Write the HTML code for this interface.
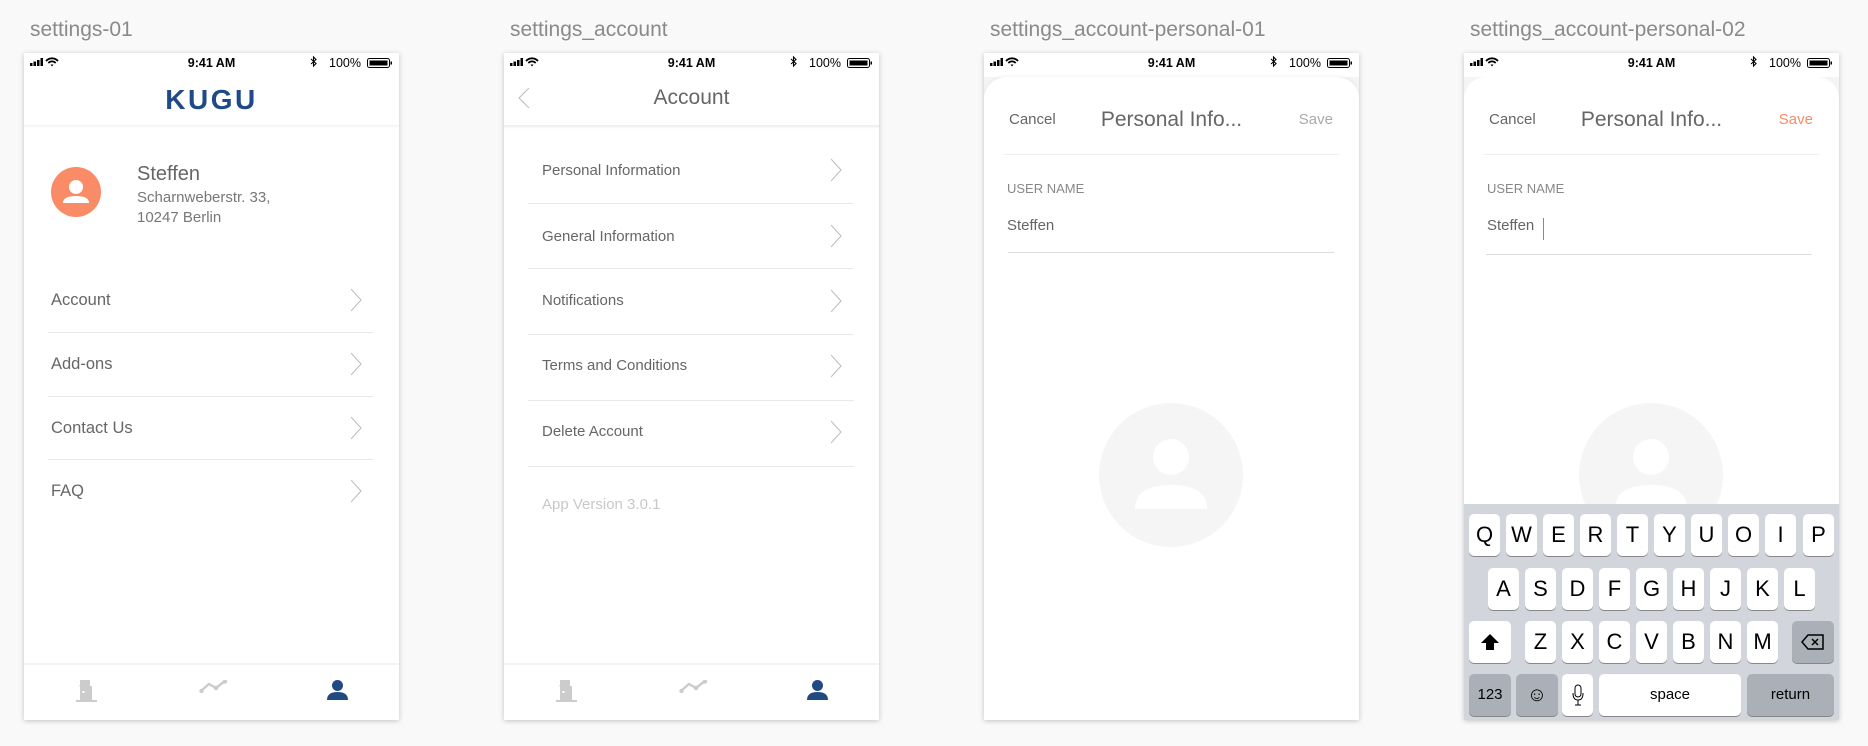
<!DOCTYPE html>
<html><head><meta charset="utf-8"><style>
*{margin:0;padding:0;box-sizing:border-box}
body{width:1868px;height:746px;background:#f9f9f9;position:relative;overflow:hidden;font-family:"Liberation Sans",sans-serif;color:#666}
.lbl{position:absolute;top:18px;font-size:21px;color:#8a8a8a}
.ph{position:absolute;top:53px;width:375px;height:667px;background:#fff;box-shadow:0 1px 5px rgba(0,0,0,.22);overflow:hidden}
.a{position:absolute}
.sb{position:absolute;top:0;left:0;width:375px;height:20px}
.time{position:absolute;top:3px;left:0;width:375px;text-align:center;font-size:12.5px;font-weight:bold;color:#000}
.pct{position:absolute;top:3px;right:38px;font-size:12.5px;color:#000}
.t{position:absolute;font-size:16.5px;color:#666;line-height:20px}
.sep{position:absolute;height:1px;background:#e8e8e8}
.key{position:absolute;width:31px;height:42px;background:#fff;border-radius:5px;box-shadow:0 1px 0 #888;font-size:22px;color:#000;text-align:center;line-height:42px}
.dk{background:#abb0b8}
</style></head><body>
<div class="lbl" style="left:30px">settings-01</div>
<div class="lbl" style="left:510px">settings_account</div>
<div class="lbl" style="left:990px">settings_account-personal-01</div>
<div class="lbl" style="left:1470px">settings_account-personal-02</div>

<svg width="0" height="0" style="position:absolute">
<defs>
<g id="sbl"><rect x="6" y="10" width="2.5" height="3" fill="#000"/><rect x="9.5" y="8.5" width="2.5" height="4.5" fill="#000"/><rect x="13" y="7" width="2.5" height="6" fill="#000"/><rect x="16.5" y="5" width="2.5" height="8" fill="#000"/>
<path d="M22 8 A8 8 0 0 1 34 8 M24.3 10 A5 5 0 0 1 31.7 10" stroke="#000" stroke-width="1.8" fill="none"/><path d="M26.5 11.5 L28 13.5 L29.5 11.5 Z" fill="#000"/></g>
<g id="sbr"><path d="M287 6 L292 10.5 L289.5 13 L289.5 4 L292 6.5 L287 11" stroke="#000" stroke-width="1.1" fill="none"/>
<rect x="343.5" y="5.5" width="22" height="9" rx="2" stroke="#000" fill="none"/><rect x="345.5" y="7.5" width="18" height="5" fill="#000"/><rect x="366.5" y="8.5" width="1.5" height="3" fill="#000"/></g>
<g id="chev"><path d="M0 0 L10 11 L0 22" stroke="#bbb" stroke-width="1" fill="none"/></g>
<g id="tabs"><path d="M55 6 H68 V20 H73 V22 H66 V8 H60 V0 Z" fill="#ccc"/><path d="M56 0 H66 V22 H52 V20 H56 Z" fill="#ccc"/><rect x="58.5" y="11" width="2" height="2" fill="#fff"/>
<path d="M177 11 L185 4 L192 8 L201 1" stroke="#ccc" stroke-width="2.4" fill="none" stroke-linecap="round"/><circle cx="177.5" cy="11" r="2.2" fill="#ccc"/><circle cx="192" cy="8" r="2.2" fill="#ccc"/><circle cx="201" cy="1.5" r="2.2" fill="#ccc"/>
<circle cx="313.5" cy="5.5" r="5.5" fill="#1f4a82"/><path d="M303 20 Q303 12 313.5 12 Q324 12 324 20 Z" fill="#1f4a82"/></g>
</defs></svg>

<!-- PHONE 1 -->
<div class="ph" style="left:24px">
 <svg class="sb" viewBox="0 0 375 20"><use href="#sbl"/><use href="#sbr"/></svg>
 <div class="time">9:41 AM</div><div class="pct">100%</div>
 <div class="a" style="top:72px;left:0;width:375px;height:3px;background:linear-gradient(#f0f0f0,#fff)"></div>
 <div class="a" style="top:31px;left:0;width:375px;text-align:center;font-size:28px;font-weight:bold;color:#1f4a87;letter-spacing:2.5px">KUGU</div>
 <svg class="a" style="left:27px;top:114px" width="50" height="50"><circle cx="25" cy="25" r="25" fill="#f98b67"/><circle cx="25" cy="20" r="7" fill="#fff"/><path d="M12 36 Q12 29 25 29 Q38 29 38 36 Z" fill="#fff"/></svg>
 <div class="t" style="left:113px;top:109px;font-size:20px;line-height:24px">Steffen</div>
 <div class="t" style="left:113px;top:135px;font-size:15px;line-height:20px;color:#777">Scharnweberstr. 33,<br>10247 Berlin</div>
 <div class="t" style="left:27px;top:237px">Account</div>
 <div class="sep" style="left:24px;width:326px;top:279px"></div>
 <div class="t" style="left:27px;top:301px">Add-ons</div>
 <div class="sep" style="left:24px;width:326px;top:343px"></div>
 <div class="t" style="left:27px;top:365px">Contact Us</div>
 <div class="sep" style="left:24px;width:326px;top:406px"></div>
 <div class="t" style="left:27px;top:428px">FAQ</div>
 <svg class="a" style="left:327px;top:0" width="12" height="667"><use href="#chev" y="236"/><use href="#chev" y="300"/><use href="#chev" y="364"/><use href="#chev" y="427"/></svg>
 <div class="a" style="left:0;top:610px;width:375px;height:2px;background:#f3f3f3"></div>
 <svg class="a" style="left:0;top:627px" width="375" height="24"><use href="#tabs"/></svg>
</div>

<!-- PHONE 2 -->
<div class="ph" style="left:504px">
 <svg class="sb" viewBox="0 0 375 20"><use href="#sbl"/><use href="#sbr"/></svg>
 <div class="time">9:41 AM</div><div class="pct">100%</div>
 <svg class="a" style="left:14px;top:34px" width="12" height="22"><path d="M11 1 L1 11 L11 21" stroke="#bbb" stroke-width="1" fill="none"/></svg>
 <div class="a" style="top:33px;left:0;width:375px;text-align:center;font-size:21px;color:#666">Account</div>
 <div class="a" style="top:72px;left:0;width:375px;height:4px;background:linear-gradient(#ececec,#fff)"></div>
 <div class="t" style="left:38px;top:108px;font-size:15px">Personal Information</div>
 <div class="sep" style="left:24px;width:326px;top:150px"></div>
 <div class="t" style="left:38px;top:174px;font-size:15px">General Information</div>
 <div class="sep" style="left:24px;width:326px;top:215px"></div>
 <div class="t" style="left:38px;top:238px;font-size:15px">Notifications</div>
 <div class="sep" style="left:24px;width:326px;top:281px"></div>
 <div class="t" style="left:38px;top:303px;font-size:15px">Terms and Conditions</div>
 <div class="sep" style="left:24px;width:326px;top:347px"></div>
 <div class="t" style="left:38px;top:369px;font-size:15px">Delete Account</div>
 <div class="sep" style="left:24px;width:326px;top:413px"></div>
 <div class="t" style="left:38px;top:442px;font-size:15px;color:#c8c8c8">App Version 3.0.1</div>
 <svg class="a" style="left:327px;top:0" width="12" height="667"><use href="#chev" y="106"/><use href="#chev" y="172"/><use href="#chev" y="237"/><use href="#chev" y="302"/><use href="#chev" y="368"/></svg>
 <div class="a" style="left:0;top:610px;width:375px;height:2px;background:#f3f3f3"></div>
 <svg class="a" style="left:0;top:627px" width="375" height="24"><use href="#tabs"/></svg>
</div>

<!-- PHONE 3 -->
<div class="ph" style="left:984px;background:#f4f4f4">
 <div class="a" style="left:0;top:0;width:375px;height:24px;background:#fff"></div>
 <svg class="sb" viewBox="0 0 375 20"><use href="#sbl"/><use href="#sbr"/></svg>
 <div class="time">9:41 AM</div><div class="pct">100%</div>
 <div class="a" style="left:0;top:24px;width:375px;height:660px;background:#fff;border-radius:22px 22px 0 0;box-shadow:0 -1px 3px rgba(0,0,0,.05)"></div>
 <div class="t" style="left:25px;top:57px;font-size:15px">Cancel</div>
 <div class="a" style="left:0;top:55px;width:375px;text-align:center;font-size:21px;color:#666">Personal Info...</div>
 <div class="t" style="right:26px;top:57px;font-size:15px;color:#aaa">Save</div>
 <div class="sep" style="left:20px;width:335px;top:101px;background:#efefef"></div>
 <div class="t" style="left:23px;top:126px;font-size:13px;color:#888">USER NAME</div>
 <div class="t" style="left:23px;top:163px;font-size:15px">Steffen</div>
 <div class="sep" style="left:24px;width:326px;top:199px;background:#ddd"></div>
 <svg class="a" style="left:115px;top:350px" width="144" height="144"><circle cx="72" cy="72" r="72" fill="#f5f5f5"/><circle cx="72" cy="54" r="18" fill="#fff"/><path d="M36 106 Q36 82 72 82 Q108 82 108 106 Z" fill="#fff"/></svg>
</div>

<!-- PHONE 4 -->
<div class="ph" style="left:1464px;background:#f4f4f4">
 <div class="a" style="left:0;top:0;width:375px;height:24px;background:#fff"></div>
 <svg class="sb" viewBox="0 0 375 20"><use href="#sbl"/><use href="#sbr"/></svg>
 <div class="time">9:41 AM</div><div class="pct">100%</div>
 <div class="a" style="left:0;top:24px;width:375px;height:660px;background:#fff;border-radius:22px 22px 0 0"></div>
 <div class="t" style="left:25px;top:57px;font-size:15px">Cancel</div>
 <div class="a" style="left:0;top:55px;width:375px;text-align:center;font-size:21px;color:#666">Personal Info...</div>
 <div class="t" style="right:26px;top:57px;font-size:15px;color:#f98b67">Save</div>
 <div class="sep" style="left:20px;width:335px;top:101px;background:#efefef"></div>
 <div class="t" style="left:23px;top:126px;font-size:13px;color:#888">USER NAME</div>
 <div class="t" style="left:23px;top:163px;font-size:15px">Steffen</div>
 <div class="a" style="left:79px;top:165px;width:1px;height:22px;background:#888"></div>
 <div class="sep" style="left:22px;width:326px;top:201px;background:#ddd"></div>
 <svg class="a" style="left:115px;top:350px" width="144" height="144"><circle cx="72" cy="72" r="72" fill="#f5f5f5"/><circle cx="72" cy="54" r="18" fill="#fff"/><path d="M36 106 Q36 82 72 82 Q108 82 108 106 Z" fill="#fff"/></svg>
 <div class="a" style="left:0;top:451px;width:375px;height:216px;background:#d2d5db">
  <div class="key" style="left:5px;top:10px">Q</div><div class="key" style="left:42px;top:10px">W</div><div class="key" style="left:79px;top:10px">E</div><div class="key" style="left:116px;top:10px">R</div><div class="key" style="left:153px;top:10px">T</div><div class="key" style="left:190px;top:10px">Y</div><div class="key" style="left:227px;top:10px">U</div><div class="key" style="left:264px;top:10px">O</div><div class="key" style="left:301px;top:10px">I</div><div class="key" style="left:339px;top:10px">P</div>
  <div class="key" style="left:24px;top:64px">A</div><div class="key" style="left:61px;top:64px">S</div><div class="key" style="left:98px;top:64px">D</div><div class="key" style="left:135px;top:64px">F</div><div class="key" style="left:172px;top:64px">G</div><div class="key" style="left:209px;top:64px">H</div><div class="key" style="left:246px;top:64px">J</div><div class="key" style="left:283px;top:64px">K</div><div class="key" style="left:320px;top:64px">L</div>
  <div class="key" style="left:5px;top:117px;width:42px"><svg width="20" height="18" style="margin-top:12px"><path d="M10 1 L19 10 H14 V17 H6 V10 H1 Z" fill="#000"/></svg></div>
  <div class="key" style="left:61px;top:117px">Z</div><div class="key" style="left:98px;top:117px">X</div><div class="key" style="left:135px;top:117px">C</div><div class="key" style="left:172px;top:117px">V</div><div class="key" style="left:209px;top:117px">B</div><div class="key" style="left:246px;top:117px">N</div><div class="key" style="left:283px;top:117px">M</div>
  <div class="key dk" style="left:328px;top:117px;width:42px"><svg width="24" height="16" style="margin-top:13px"><path d="M7 1 H22 V15 H7 L1 8 Z" stroke="#000" stroke-width="1.5" fill="none"/><path d="M11 5 L17 11 M17 5 L11 11" stroke="#000" stroke-width="1.5"/></svg></div>
  <div class="key dk" style="left:5px;top:170px;width:42px;font-size:15px">123</div>
  <div class="key dk" style="left:52px;top:170px;width:42px;font-size:20px">☺</div>
  <div class="key" style="left:98px;top:170px"><svg width="12" height="22" style="margin-top:10px"><rect x="3" y="1" width="6" height="12" rx="3" stroke="#000" fill="none"/><path d="M1 9 Q1 16 6 16 Q11 16 11 9 M6 16 V21 M3 21 H9" stroke="#000" fill="none"/></svg></div>
  <div class="key" style="left:135px;top:170px;width:142px;font-size:15px">space</div>
  <div class="key dk" style="left:283px;top:170px;width:87px;font-size:15px">return</div>
 </div>
</div>
</body></html>
